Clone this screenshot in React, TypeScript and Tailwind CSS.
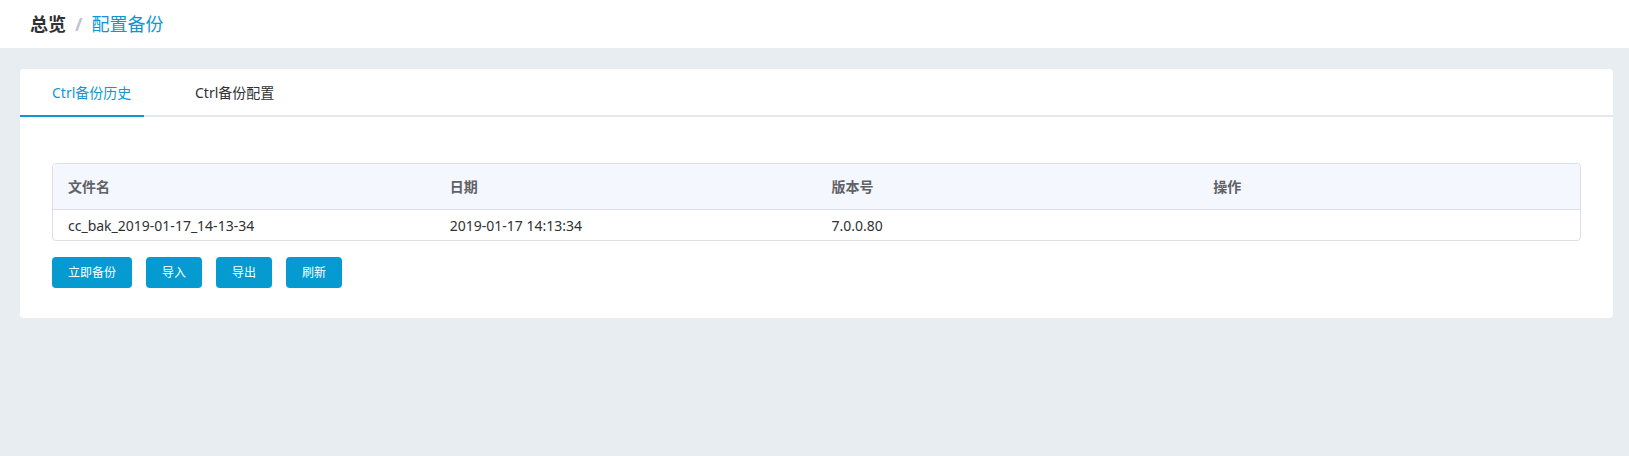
import React from "react";

const font = { fontFamily: '"Noto Sans", "Noto Sans CJK SC", sans-serif' };

export default function App() {
  return (
    <div className="min-h-[456px] w-full bg-[#e8edf1]" style={font}>
      <div className="h-[48px] bg-white flex items-center pl-[30px] text-[18px]">
        <span className="font-bold text-[#303133]">总览</span>
        <span className="mx-[9px] text-[#c0c4cc] font-bold">/</span>
        <span className="text-[#1296d1]">配置备份</span>
      </div>
      <div className="pt-[21px] pl-[20px] pr-[16px]">
        <div className="bg-white rounded-[4px] pb-[30px]">
          <div className="flex h-[48px] border-b-2 border-[#e4e7ed] text-[14px]">
            <div className="w-[124px] pl-[32px] pt-[1px] flex items-center text-[#1296d1] border-b-2 border-[#0e98d2] -mb-[2px]">
              Ctrl备份历史
            </div>
            <div className="pl-[51px] pt-[1px] flex items-center text-[#303133]">
              Ctrl备份配置
            </div>
          </div>
          <div className="px-[32px] pt-[46px]">
            <div className="border border-[#dcdfe6] rounded-[4px] overflow-hidden text-[14px]">
              <div className="grid grid-cols-4 h-[46px] bg-[#f4f7fd] border-b border-[#dcdfe6] items-center text-[#606266] font-bold">
                <div className="pl-[15px]">文件名</div>
                <div className="pl-[15px]">日期</div>
                <div className="pl-[15px]">版本号</div>
                <div className="pl-[15px]">操作</div>
              </div>
              <div className="grid grid-cols-4 h-[30px] items-center text-[#303133]">
                <div className="pl-[15px]">cc_bak_2019-01-17_14-13-34</div>
                <div className="pl-[15px]">2019-01-17 14:13:34</div>
                <div className="pl-[15px]">7.0.0.80</div>
                <div className="pl-[15px]"></div>
              </div>
            </div>
            <div className="flex gap-[14px] mt-[16px]">
              {["立即备份", "导入", "导出", "刷新"].map((t) => (
                <button
                  key={t}
                  className="h-[31px] px-[16px] rounded-[4px] bg-[#059ad0] text-white text-[12px]"
                >
                  {t}
                </button>
              ))}
            </div>
          </div>
        </div>
      </div>
    </div>
  );
}
